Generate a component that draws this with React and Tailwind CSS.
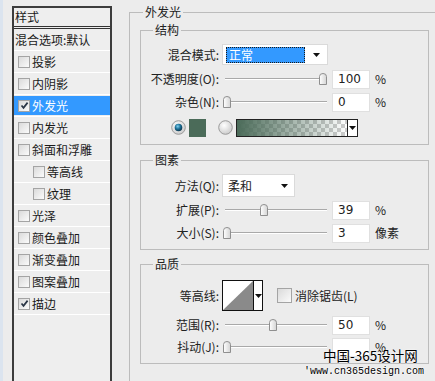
const FONT = "font-['Noto_Sans_CJK_SC','Noto_Sans',sans-serif]";

const STYLES = [
  { label: '投影' },
  { label: '内阴影' },
  { label: '外发光', checked: true, active: true },
  { label: '内发光' },
  { label: '斜面和浮雕' },
  { label: '等高线', sub: true },
  { label: '纹理', sub: true },
  { label: '光泽' },
  { label: '颜色叠加' },
  { label: '渐变叠加' },
  { label: '图案叠加' },
  { label: '描边', checked: true },
];

function Check({ checked, size = 12 }) {
  return (
    <span
      className="shrink-0 border border-[#a4a4a4] bg-[linear-gradient(135deg,#dadada,#fbfbfb)] flex items-center justify-center"
      style={{ width: size, height: size }}
    >
      {checked && (
        <svg width="9" height="9" viewBox="0 0 9 9">
          <path d="M1.5 4.5 L3.5 6.8 L7.6 1.6" fill="none" stroke="#2a3646" strokeWidth="1.7" />
        </svg>
      )}
    </span>
  );
}

function Arrow() {
  return (
    <svg width="7" height="4" viewBox="0 0 7 4" className="shrink-0">
      <path d="M0 0 H7 L3.5 4 Z" fill="#111" />
    </svg>
  );
}

function Thumb() {
  return (
    <svg width="8" height="12" viewBox="0 0 8 12">
      <defs>
        <linearGradient id="tg" x1="0" y1="0" x2="1" y2="0">
          <stop offset="0" stopColor="#ffffff" />
          <stop offset="1" stopColor="#d4d4d4" />
        </linearGradient>
      </defs>
      <path d="M0.5 11.5 V3.5 Q0.5 0.5 4 0.5 Q7.5 0.5 7.5 3.5 V11.5 Z" fill="url(#tg)" stroke="#8f8f8f" />
    </svg>
  );
}

function Slider({ value }) {
  return (
    <div className="relative w-[108px] h-full ml-[3px] flex items-center">
      <div className="mx-[3px] w-full h-[2px] border-t border-[#a9a9a9] border-b border-b-white" />
      <div className="absolute top-1/2 -translate-y-1/2 flex" style={{ left: 1 + value * 0.96 }}>
        <Thumb />
      </div>
    </div>
  );
}

function NumBox({ value }) {
  return (
    <div className="w-[38px] h-[19px] ml-[2px] bg-white border border-[#e0e0e0] flex items-center pl-[5px] text-[12px] text-[#222] font-['DejaVu_Sans',sans-serif]">
      {value}
    </div>
  );
}

function Label({ children }) {
  return <div className="w-[78px] shrink-0 text-right text-[12px] text-[#222] whitespace-nowrap">{children}</div>;
}

function SliderRow({ label, value, num, unit, className = '' }) {
  return (
    <div className={`flex items-center h-[22px] ${className}`}>
      <Label>{label}</Label>
      <Slider value={value} />
      <NumBox value={num} />
      <span className="ml-[5px] text-[12px] text-[#222]">{unit}</span>
    </div>
  );
}

function Group({ title, children, className = '' }) {
  return (
    <fieldset className={`w-[289px] border border-[#bcbcbc] ${className}`}>
      <legend className="ml-[12px] px-[2px] text-[12px] leading-[18px] text-[#222]">{title}</legend>
      {children}
    </fieldset>
  );
}

function Radio({ on }) {
  return (
    <svg width="15" height="15" viewBox="0 0 15 15" className="shrink-0">
      <defs>
        <radialGradient id={on ? 'ron' : 'roff'} cx="0.4" cy="0.35" r="0.7">
          <stop offset="0" stopColor="#ffffff" />
          <stop offset="1" stopColor="#c9c9c9" />
        </radialGradient>
        <radialGradient id="dot" cx="0.4" cy="0.35" r="0.7">
          <stop offset="0" stopColor="#7fd0f0" />
          <stop offset="0.5" stopColor="#1b6f96" />
          <stop offset="1" stopColor="#0c2f44" />
        </radialGradient>
      </defs>
      <circle cx="7.5" cy="7.5" r="6.8" fill={`url(#${on ? 'ron' : 'roff'})`} stroke="#9b9b9b" />
      {on && <circle cx="7.5" cy="7.5" r="3.8" fill="url(#dot)" />}
    </svg>
  );
}

export default function App() {
  return (
    <div className={`relative w-[435px] h-[381px] overflow-hidden bg-[#ececec] flex ${FONT}`}>
      <div className="w-[12px] shrink-0 flex">
        <div className="w-[3px] bg-[#dbe4ef]" />
      </div>

      <div className="mt-[6px] w-[100px] h-[400px] shrink-0 border-2 border-[#3c3c3c] bg-[#eeeeee] text-[12px] text-[#1a1a1a]">
        <div className="h-[21px] flex items-center pl-[1px] border-b-[3px] border-double border-[#333]">样式</div>
        <div className="h-[22px] flex items-center pl-[1px] border-b border-white whitespace-nowrap">混合选项:默认</div>
        {STYLES.map((s) => (
          <div key={s.label} className="h-[22px] border-b border-white py-[1px]">
            <div
              className={`h-full flex items-center gap-[2px] ${s.sub ? 'pl-[19px]' : 'pl-[4px]'} ${
                s.active ? 'bg-[#3399ff] text-white' : ''
              }`}
            >
              <Check checked={s.checked} />
              <span>{s.label}</span>
            </div>
          </div>
        ))}
      </div>

      <fieldset className="ml-[17px] mt-[3px] w-[320px] h-[420px] shrink-0 border border-[#bcbcbc] text-[12px] text-[#222]">
        <legend className="ml-[13px] px-[2px] text-[12px] leading-[18px]">外发光</legend>
        <div className="pl-[10px]">
          <Group title="结构" className="pb-[7px]">
            <div className="flex items-center h-[21px] mt-[5px]">
              <Label>混合模式:</Label>
              <div className="ml-[3px] w-[106px] h-[21px] bg-white border border-[#dadada] flex items-center pl-[3px] pr-[7px]">
                <div className="w-[79px] h-[16px] bg-[#3399ff] border border-dotted border-[#1a1a1a] text-white flex items-center pl-[2px] leading-none">
                  正常
                </div>
                <div className="flex-1" />
                <Arrow />
              </div>
            </div>
            <SliderRow label="不透明度(O):" value={100} num="100" unit="%" className="mt-[3px]" />
            <SliderRow label="杂色(N):" value={0} num="0" unit="%" className="mt-[1px]" />
            <div className="flex items-center h-[19px] mt-[5px] pl-[30px]">
              <Radio on />
              <div className="ml-[3px] w-[17px] h-[18px] bg-[#4b6b59]" />
              <div className="ml-[12px]">
                <Radio />
              </div>
              <div className="ml-[3px] w-[122px] h-[18px] border border-[#222] flex">
                <div className="flex-1 [background:linear-gradient(to_right,#4b6b59,rgba(75,107,89,0)),repeating-conic-gradient(#cdcdcd_0%_25%,#ffffff_0%_50%)_0_0/8px_8px]" />
                <div className="w-[10px] bg-white border-l border-[#222] flex items-center justify-center">
                  <Arrow />
                </div>
              </div>
            </div>
          </Group>

          <Group title="图素" className="mt-[6px] pb-[5px]">
            <div className="flex items-center h-[23px] mt-[5px]">
              <Label>方法(Q):</Label>
              <div className="ml-[3px] w-[73px] h-[23px] bg-white border border-[#dadada] flex items-center pl-[5px] pr-[6px]">
                <span>柔和</span>
                <div className="flex-1" />
                <Arrow />
              </div>
            </div>
            <SliderRow label="扩展(P):" value={39} num="39" unit="%" className="mt-[2px]" />
            <SliderRow label="大小(S):" value={0} num="3" unit="像素" className="mt-[1px]" />
          </Group>

          <Group title="品质" className="mt-[5px] pb-[5px]">
            <div className="flex items-center h-[31px] mt-[7px]">
              <Label>等高线:</Label>
              <div className="ml-[3px] w-[41px] h-[31px] border border-[#111] flex bg-white">
                <svg width="30" height="29" viewBox="0 0 30 29" className="shrink-0">
                  <path d="M0 29 L30 0 L30 29 Z" fill="#8a8a8a" />
                </svg>
                <div className="flex-1 border-l border-[#111] flex items-center justify-center">
                  <Arrow />
                </div>
              </div>
              <div className="ml-[14px] flex items-center gap-[3px]">
                <Check size={15} />
                <span>消除锯齿(L)</span>
              </div>
            </div>
            <SliderRow label="范围(R):" value={48} num="50" unit="%" className="mt-[3px]" />
            <SliderRow label="抖动(J):" value={0} num="" unit="%" />
          </Group>
        </div>
      </fieldset>

      <div className="absolute left-[323px] top-[346px] text-[13.5px] leading-[18px] text-black whitespace-nowrap [text-shadow:0_0_2px_#fff]">
        中国-365设计网
      </div>
      <div className="absolute left-[304px] top-[365px] font-['Liberation_Mono',monospace] text-[10px] leading-[13px] text-black [text-shadow:0_0_2px_#fff,0_0_2px_#fff] whitespace-nowrap">
        'www.cn365design.com
      </div>
    </div>
  );
}
